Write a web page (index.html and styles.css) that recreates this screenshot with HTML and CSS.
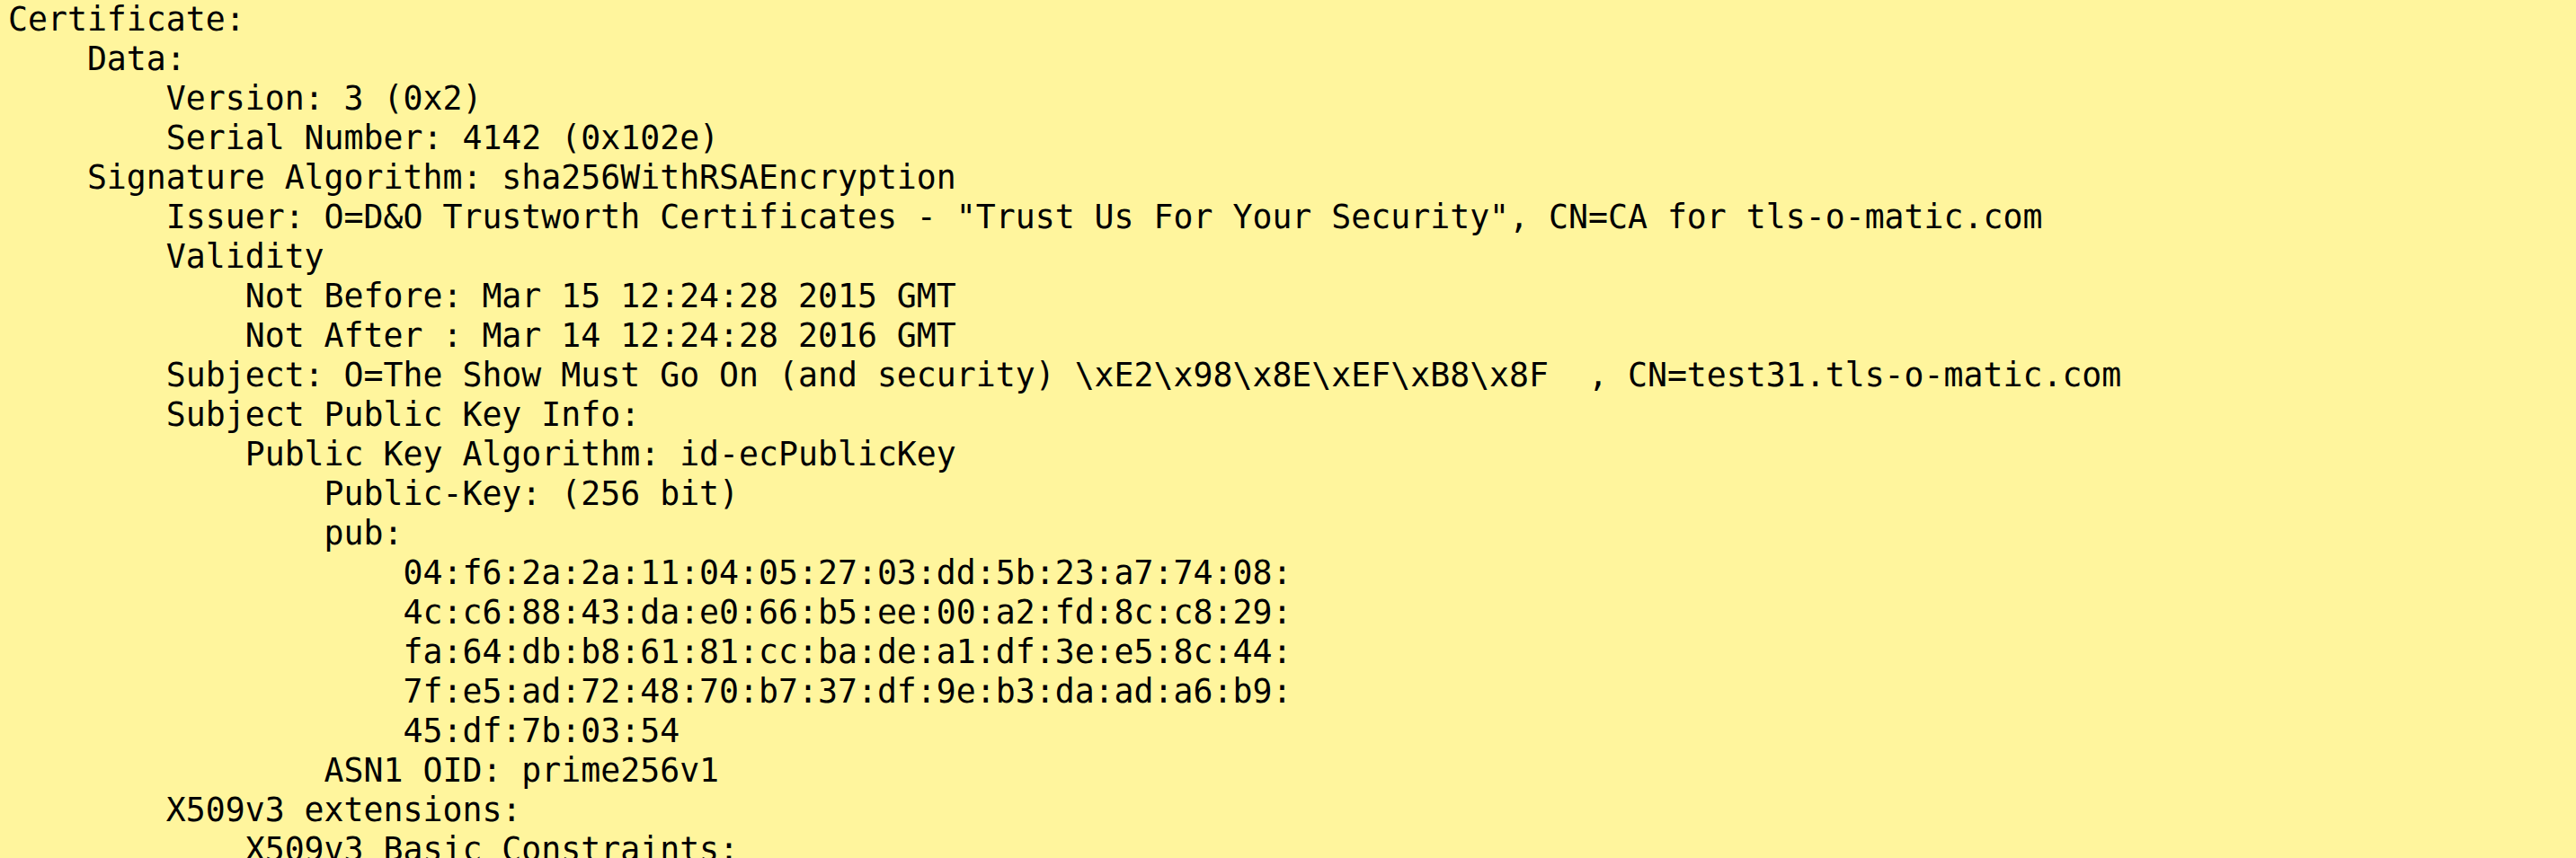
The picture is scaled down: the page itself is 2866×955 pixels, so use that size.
FILE: index.html
```html
<!DOCTYPE html>
<html>
<head>
<meta charset="utf-8">
<link rel="stylesheet" href="styles.css">
</head>
<body>
<pre class="cert">Certificate:
    Data:
        Version: 3 (0x2)
        Serial Number: 4142 (0x102e)
    Signature Algorithm: sha256WithRSAEncryption
        Issuer: O=D&amp;O Trustworth Certificates - "Trust Us For Your Security", CN=CA for tls-o-matic.com
        Validity
            Not Before: Mar 15 12:24:28 2015 GMT
            Not After : Mar 14 12:24:28 2016 GMT
        Subject: O=The Show Must Go On (and security) \xE2\x98\x8E\xEF\xB8\x8F  , CN=test31.tls-o-matic.com
        Subject Public Key Info:
            Public Key Algorithm: id-ecPublicKey
                Public-Key: (256 bit)
                pub:
                    04:f6:2a:2a:11:04:05:27:03:dd:5b:23:a7:74:08:
                    4c:c6:88:43:da:e0:66:b5:ee:00:a2:fd:8c:c8:29:
                    fa:64:db:b8:61:81:cc:ba:de:a1:df:3e:e5:8c:44:
                    7f:e5:ad:72:48:70:b7:37:df:9e:b3:da:ad:a6:b9:
                    45:df:7b:03:54
                ASN1 OID: prime256v1
        X509v3 extensions:
            X509v3 Basic Constraints:
                CA:FALSE
</pre>
</body>
</html>
```
FILE: styles.css
```css
html, body {
  margin: 0;
  padding: 0;
  background: #fff59d;
  overflow: hidden;
}
body {
  padding: 0 0 0 9px;
}
.cert {
  margin: 0;
  font-family: "DejaVu Sans Mono", monospace;
  font-size: 36.5px;
  line-height: 44px;
  color: #000;
  white-space: pre;
}
```
